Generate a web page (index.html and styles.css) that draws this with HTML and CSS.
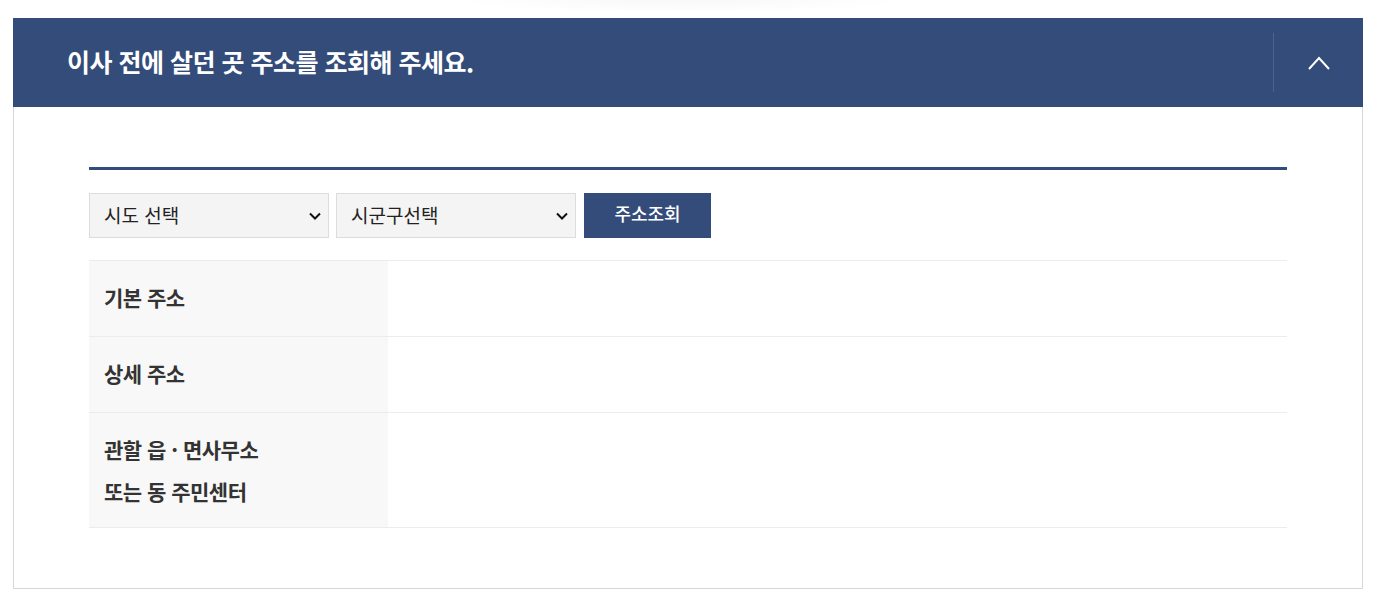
FILE: index.html
```html
<!DOCTYPE html>
<html lang="ko">
<head>
<meta charset="utf-8">
<link rel="stylesheet" href="styles.css">
</head>
<body>
<div class="top-space"></div>
<section class="panel">
  <header class="panel-head">
    <h2 class="panel-title">이사 전에 살던 곳 주소를 조회해 주세요.</h2>
    <button class="toggle" type="button" aria-label="접기">
      <svg width="22" height="14" viewBox="0 0 22 14"><path d="M1 13 L11 2 L21 13" fill="none" stroke="#fff" stroke-width="2"/></svg>
    </button>
  </header>
  <div class="panel-body">
    <div class="search-row">
      <div class="select-wrap">
        <select class="sel"><option>시도 선택</option></select>
        <svg class="sel-arrow" width="12" height="8" viewBox="0 0 12 8"><path d="M1 1.5 L6 6.5 L11 1.5" fill="none" stroke="#111" stroke-width="2"/></svg>
      </div>
      <div class="select-wrap">
        <select class="sel"><option>시군구선택</option></select>
        <svg class="sel-arrow" width="12" height="8" viewBox="0 0 12 8"><path d="M1 1.5 L6 6.5 L11 1.5" fill="none" stroke="#111" stroke-width="2"/></svg>
      </div>
      <button class="btn" type="button">주소조회</button>
    </div>
    <div class="info-table">
      <div class="info-row">
        <div class="info-th">기본 주소</div>
        <div class="info-td"></div>
      </div>
      <div class="info-row">
        <div class="info-th">상세 주소</div>
        <div class="info-td"></div>
      </div>
      <div class="info-row">
        <div class="info-th">관할 읍 · 면사무소<br>또는 동 주민센터</div>
        <div class="info-td"></div>
      </div>
    </div>
  </div>
</section>
</body>
</html>
```

FILE: styles.css
```css
* { box-sizing: border-box; }
html, body { margin: 0; padding: 0; background: #fff; }
body {
  font-family: "Noto Sans CJK KR", "Noto Sans", sans-serif;
  color: #333;
  padding: 0 21px 0 13px;
}
.top-space {
  height: 18px;
  background: radial-gradient(ellipse 230px 12px at 680px 0, #f8f8f8 0%, #fcfcfc 60%, rgba(255,255,255,0) 100%);
  margin: 0 -21px 0 -13px;
}
.panel { width: 1350px; }
.panel-head {
  height: 89px;
  background: #344c7a;
  display: flex;
  align-items: center;
  padding-left: 54px;
}
.panel-title {
  flex: 1;
  margin: 0;
  color: #fff;
  font-size: 25px;
  font-weight: 700;
  letter-spacing: -0.5px;
  line-height: 1;
  padding-bottom: 2px;
}
.toggle {
  width: 90px;
  height: 59px;
  border: 0;
  border-left: 1px solid #4b6391;
  background: transparent;
  padding: 0;
  display: flex;
  align-items: center;
  justify-content: center;
  cursor: pointer;
}
.panel-body {
  border: 1px solid #d6d6d6;
  border-top: 0;
  padding: 60px 75px 60px 75px;
}
.search-row {
  border-top: 3px solid #344c7a;
  padding-top: 23px;
  display: flex;
  gap: 7px;
}
.select-wrap {
  position: relative;
  width: 240px;
  height: 45px;
}
.sel {
  appearance: none;
  -webkit-appearance: none;
  width: 100%;
  height: 100%;
  border: 1px solid #dcdcdc;
  background: #f4f4f4;
  font-family: "Noto Sans CJK KR", sans-serif;
  font-size: 19px;
  color: #222;
  padding: 0 0 3px 14px;
  margin: 0;
  border-radius: 0;
}
.sel-arrow {
  position: absolute;
  right: 8px;
  top: 19px;
  pointer-events: none;
}
.btn {
  margin-left: 1px;
  width: 127px;
  height: 45px;
  border: 0;
  background: #344c7a;
  color: #fff;
  font-family: "Noto Sans CJK KR", sans-serif;
  font-size: 18px;
  font-weight: 500;
  padding: 0 0 6px 0;
}
.info-table {
  margin-top: 22px;
  border-top: 1px solid #ececec;
}
.info-row {
  display: grid;
  grid-template-columns: 299px 1fr;
  border-bottom: 1px solid #ececec;
}
.info-th {
  background: #f8f8f8;
  padding: 15px 15px;
  min-height: 75px;
  font-size: 21px;
  font-weight: 700;
  line-height: 42px;
  letter-spacing: -0.5px;
  color: #333;
}
.info-td { background: #fff; }
```
